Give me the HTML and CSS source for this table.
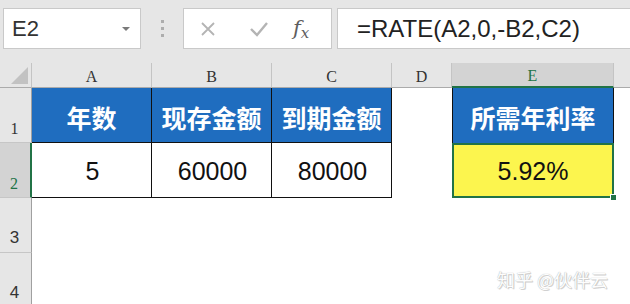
FILE: index.html
```html
<!DOCTYPE html>
<html lang="zh">
<head>
<meta charset="utf-8">
<title>RATE</title>
<link rel="stylesheet" href="styles.css">
</head>
<body>
<div class="app">
  <div class="toolbar">
    <div class="namebox">
      <span class="name">E2</span>
      <span class="drop"></span>
    </div>
    <div class="grip"><i></i><i></i><i></i></div>
    <div class="fxbox">
      <svg class="ic" width="16" height="16" viewBox="0 0 16 16"><path d="M2 2 L14 14 M14 2 L2 14" stroke="#b4b4b4" stroke-width="1.8" fill="none"/></svg>
      <svg class="ic" width="20" height="16" viewBox="0 0 20 16"><path d="M2 8 L8 14 L18 2" stroke="#b4b4b4" stroke-width="2.4" fill="none"/></svg>
      <span class="fx">f<span class="fxx">x</span></span>
    </div>
    <div class="formula">=RATE(A2,0,-B2,C2)</div>
  </div>
  <div class="sheet">
    <div class="corner"><div class="tri"></div></div>
    <div class="colhead">A</div>
    <div class="colhead">B</div>
    <div class="colhead">C</div>
    <div class="colhead">D</div>
    <div class="colhead sel">E</div>
    <div class="colhead last"></div>

    <div class="rowhead">1</div>
    <div class="cell head">年数</div>
    <div class="cell head">现存金额</div>
    <div class="cell head">到期金额</div>
    <div class="cell"></div>
    <div class="cell head solo">所需年利率</div>
    <div class="cell"></div>

    <div class="rowhead sel">2</div>
    <div class="cell data">5</div>
    <div class="cell data">60000</div>
    <div class="cell data">80000</div>
    <div class="cell"></div>
    <div class="cell result">5.92%<span class="handle"></span></div>
    <div class="cell"></div>

    <div class="rowhead sans">3</div>
    <div class="cell"></div><div class="cell"></div><div class="cell"></div><div class="cell"></div><div class="cell"></div><div class="cell"></div>

    <div class="rowhead sans">4</div>
    <div class="cell"></div><div class="cell"></div><div class="cell"></div><div class="cell"></div><div class="cell"></div><div class="cell"></div>
  </div>
  <div class="watermark">知乎 @伙伴云</div>
</div>
</body>
</html>
```
FILE: styles.css
```css
* { box-sizing: border-box; }
html, body { margin: 0; padding: 0; }
body { width: 630px; height: 304px; overflow: hidden; background: #fff; font-family: "Liberation Sans", "Noto Sans CJK SC", sans-serif; }
.app { position: relative; width: 630px; height: 304px; overflow: hidden; }

.toolbar { height: 63px; background: #e6e6e6; display: flex; align-items: flex-start; padding: 8px 0 0 3px; }
.namebox { width: 138px; height: 41px; background: #fff; border: 1px solid #c9c9c9; display: flex; align-items: center; padding: 0 10px 0 8px; }
.name { font-size: 22px; color: #333; }
.drop { margin-left: auto; width: 0; height: 0; border-left: 4px solid transparent; border-right: 4px solid transparent; border-top: 4px solid #7a7a7a; }
.grip { width: 42px; height: 41px; display: flex; flex-direction: column; align-items: center; justify-content: center; gap: 4px; }
.grip i { display: block; width: 3px; height: 3px; background: #adadad; }
.fxbox { width: 149px; height: 41px; background: #fff; border: 1px solid #c9c9c9; display: flex; align-items: center; padding-left: 16px; }
.fxbox .ic:first-child { margin-right: 33px; }
.fxbox .ic:nth-child(2) { margin-right: 24px; }
.fx { font-family: "DejaVu Serif", serif; font-style: italic; font-size: 21px; color: #5e5e5e; line-height: 1; display: flex; align-items: flex-end; }
.fxx { font-size: 15px; margin-left: 0; position: relative; top: 2px; }
.formula { margin-left: 5px; flex: 1; height: 41px; background: #fff; border: 1px solid #c9c9c9; border-right: none; display: flex; align-items: center; padding-left: 19px; font-size: 24px; color: #222; white-space: nowrap; }

.sheet { display: grid; grid-template-columns: 32px 120px 120px 120px 60px 162px 1fr; grid-template-rows: 25px 55px 55px 55px 55px; background: #fff; }
.corner { background: #e6e6e6; border-right: 1px solid #c4c4c4; border-bottom: 1px solid #ababab; display: flex; align-items: flex-end; justify-content: flex-end; padding: 0 3px 3px 0; }
.tri { width: 0; height: 0; border-left: 17px solid transparent; border-bottom: 17px solid #c2c2c2; }
.colhead { background: #e6e6e6; border-right: 1px solid #c4c4c4; border-bottom: 1px solid #ababab; display: flex; align-items: center; justify-content: center; padding-top: 3px; font-family: "Liberation Serif", serif; font-size: 16px; color: #333; }
.colhead.sel { background: #d3d3d3; color: #217346; border-bottom: 2px solid #217346; }
.colhead.last { border-right: none; }
.rowhead { background: #e6e6e6; border-right: 1px solid #a0a0a0; border-bottom: 1px solid #c6c6c6; display: flex; align-items: flex-end; justify-content: center; padding: 0 2px 4px 0; font-family: "Liberation Serif", serif; font-size: 16px; color: #333; }
.rowhead.sel { background: #d3d3d3; color: #217346; border-right: 2px solid #217346; }
.rowhead.sans { font-family: "Liberation Sans", sans-serif; font-size: 17px; }

.cell { display: flex; align-items: center; justify-content: center; padding-top: 3px; }
.head { background: #1f6dbf; color: #fff; font-family: "Noto Sans CJK SC", sans-serif; font-weight: 700; font-size: 25px; border-right: 1px solid #111; border-bottom: 1px solid #111; }
.head.solo { border-left: 1px solid #111; border-bottom: none; }
.data { font-size: 25px; color: #111; border-right: 1px solid #111; border-bottom: 1px solid #111; padding-left: 2px; }
.result { position: relative; background: #fcf54e; border: 2px solid #217346; font-size: 25px; color: #111; padding-top: 1px; }
.handle { position: absolute; right: -5px; bottom: -5px; width: 7px; height: 7px; background: #217346; border: 1px solid #fff; }

.watermark { position: absolute; left: 497px; top: 266px; font-family: "Noto Sans CJK SC", sans-serif; font-size: 18px; color: #fdfdfd; text-shadow: 0 0 1px #a0a0a0, 1px 1px 0 #d6d6d6; white-space: nowrap; }
```
